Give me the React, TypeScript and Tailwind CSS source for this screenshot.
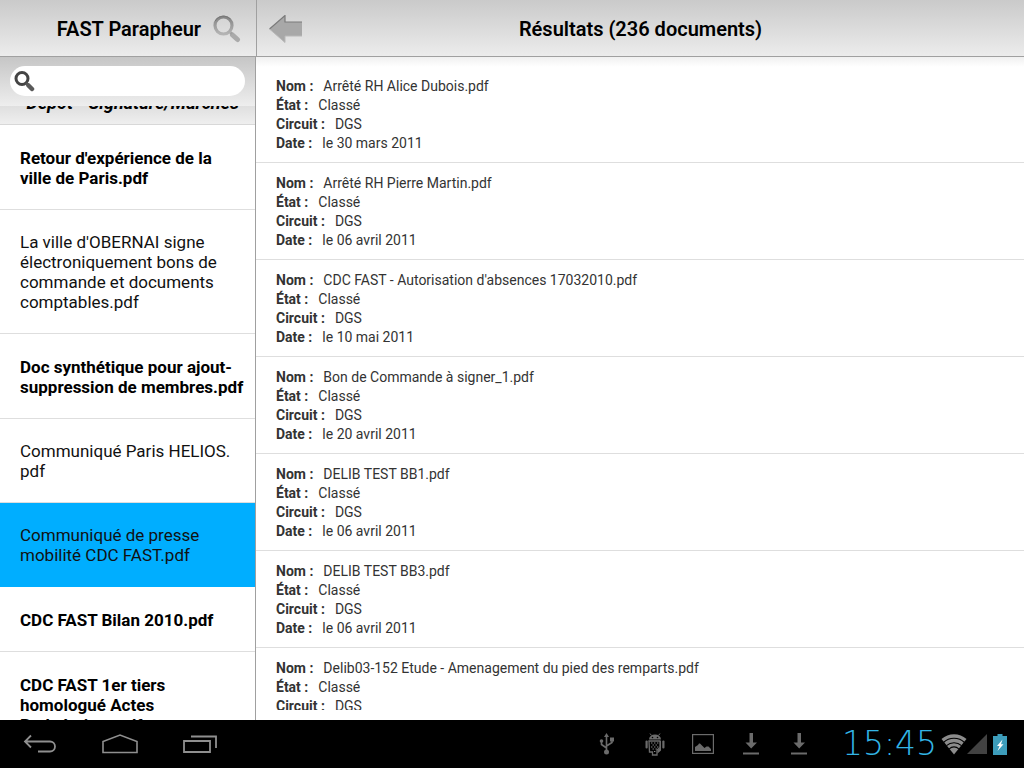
import React from 'react';

interface SidebarItem {
  title: string;
  unread?: boolean;
  selected?: boolean;
}

interface ResultItem {
  nom: string;
  etat: string;
  circuit: string;
  date: string;
}

const sidebarItems: SidebarItem[] = [
  { title: "Retour d'expérience de la ville de Paris.pdf", unread: true },
  { title: "La ville d'OBERNAI signe électroniquement bons de commande et documents comptables.pdf" },
  { title: 'Doc synthétique pour ajout-suppression de membres.pdf', unread: true },
  { title: 'Communiqué Paris HELIOS.\u200bpdf' },
  { title: 'Communiqué de presse mobilité CDC FAST.pdf', selected: true },
  { title: 'CDC FAST Bilan 2010.pdf', unread: true },
  { title: 'CDC FAST 1er tiers homologué Actes Budgétaires.pdf', unread: true },
];

const results: ResultItem[] = [
  { nom: 'Arrêté RH Alice Dubois.pdf', etat: 'Classé', circuit: 'DGS', date: 'le 30 mars 2011' },
  { nom: 'Arrêté RH Pierre Martin.pdf', etat: 'Classé', circuit: 'DGS', date: 'le 06 avril 2011' },
  { nom: "CDC FAST - Autorisation d'absences 17032010.pdf", etat: 'Classé', circuit: 'DGS', date: 'le 10 mai 2011' },
  { nom: 'Bon de Commande à signer_1.pdf', etat: 'Classé', circuit: 'DGS', date: 'le 20 avril 2011' },
  { nom: 'DELIB TEST BB1.pdf', etat: 'Classé', circuit: 'DGS', date: 'le 06 avril 2011' },
  { nom: 'DELIB TEST BB3.pdf', etat: 'Classé', circuit: 'DGS', date: 'le 06 avril 2011' },
  { nom: 'Delib03-152 Etude - Amenagement du pied des remparts.pdf', etat: 'Classé', circuit: 'DGS', date: 'le 06 avril 2011' },
];

function HeaderSearchIcon() {
  return (
    <svg width="28" height="28" viewBox="0 0 28 28" fill="none">
      <defs>
        <linearGradient id="lens" x1="0" y1="0" x2="0" y2="1">
          <stop offset="0" stopColor="#858585" />
          <stop offset="1" stopColor="#b4b4b4" />
        </linearGradient>
      </defs>
      <path d="M19.5 20l5 4.500" stroke="#aaaaaa" strokeWidth="5" strokeLinecap="round" />
      <path d="M16 16l3 3" stroke="#a0a0a0" strokeWidth="2.5" />
      <circle cx="10.5" cy="10.5" r="8.5" stroke="url(#lens)" strokeWidth="3.2" />
      <path d="M2.200 6a9.500 9.500 0 0 1 15-2" stroke="#777" strokeWidth="1" />
    </svg>
  );
}

function BackArrowIcon() {
  return (
    <svg width="34" height="28" viewBox="0 0 34 28">
      <path d="M0.5 14L16 0.5V7H33V21H16V27.5Z" fill="#a8a8a8" />
      <path d="M0.5 14L16 0.5V7H33" fill="none" stroke="#7b7b7b" strokeWidth="1.2" />
      <path d="M33 21H16V27.5L0.5 14" fill="none" stroke="#b8b8b8" strokeWidth="1" />
    </svg>
  );
}

function FieldSearchIcon() {
  return (
    <svg width="21" height="21" viewBox="0 0 21 21" fill="none">
      <circle cx="8" cy="7.5" r="6" stroke="#444" strokeWidth="3" />
      <path d="M12 12l2 2" stroke="#555" strokeWidth="3" />
      <path d="M14.5 14.5l3.5 3.5" stroke="#5a5a5a" strokeWidth="4.5" strokeLinecap="round" />
    </svg>
  );
}

function UsbIcon() {
  return (
    <svg width="16" height="22" viewBox="0 0 16 22" fill="none">
      <path d="M7.5 3v15M7.5 15L2.5 11.5V8M7.5 13L13 9.5V6" stroke="#6b6b6b" strokeWidth="1.6" />
      <path d="M7.5 0L10 4H5Z" fill="#6b6b6b" />
      <circle cx="7.5" cy="19" r="2.5" fill="#6b6b6b" />
      <circle cx="2.5" cy="8" r="1.8" fill="#6b6b6b" />
      <path d="M11 4.5h4v4h-4z" fill="#6b6b6b" />
    </svg>
  );
}

function AndroidIcon() {
  return (
    <svg width="20" height="23" viewBox="0 0 20 23" fill="none">
      <path d="M4 6.5a6 5 0 0 1 12 0z" fill="#6b6b6b" />
      <path d="M6.5 2.5L5 0.5M13.5 2.5L15 0.5" stroke="#6b6b6b" strokeWidth="1" />
      <circle cx="7.5" cy="4.5" r="0.8" fill="#000" />
      <circle cx="12.5" cy="4.5" r="0.8" fill="#000" />
      <rect x="0.5" y="7.5" width="2.2" height="8" rx="1" fill="#6b6b6b" />
      <rect x="17.3" y="7.5" width="2.2" height="8" rx="1" fill="#6b6b6b" />
      <path d="M4 8h11v6.5l-3 2.5v5H7.5v-3H4.5Z" stroke="#6b6b6b" strokeWidth="1.3" />
      <path d="M15 8v7l-2.5 2v3.5l3.5-3V8Z" fill="#6b6b6b" />
      <path
        d="M6 10h1.4M9 10h1.4M12 10h1.4M7.5 12h1.4M10.5 12h1.4M6 14h1.4M9 14h1.4M12 14h1.4M7.5 16h1.4M10.5 16h1.4M9 18.5h1.4"
        stroke="#858585"
        strokeWidth="1.2"
      />
    </svg>
  );
}

function PictureIcon() {
  return (
    <svg width="22" height="20" viewBox="0 0 22 20" fill="none">
      <rect x="0.6" y="0.6" width="20.8" height="18.8" stroke="#6b6b6b" strokeWidth="1.2" />
      <path d="M3 17v-4l3-2 1-1.5h1l2.5 2.5 2 2 2-1.5h2l2.5 2.5v2z" fill="#6b6b6b" />
    </svg>
  );
}

function DownloadIcon() {
  return (
    <svg width="16" height="22" viewBox="0 0 16 22" fill="#6b6b6b">
      <path d="M6.5 0h3.5v9.5h4L8.2 15.5 2.5 9.5h4zM0 19.5h16V21.5H0z" />
    </svg>
  );
}

function WifiIcon() {
  return (
    <svg width="26" height="21" viewBox="0 0 26 21" fill="none">
      <path d="M0.5 5a19 19 0 0 1 25 0L13 20.5Z" fill="#8c8c8c" />
      <path d="M2.5 8.5a15 15 0 0 1 21 0M5.5 11.7a11 11 0 0 1 15 0M8.2 14.8a7 7 0 0 1 9.6 0" stroke="#000" strokeWidth="1.1" />
    </svg>
  );
}

function BatteryIcon() {
  return (
    <svg width="14" height="21" viewBox="0 0 14 21">
      <path d="M4.5 0h5v2H14v19H0V2h4.5z" fill="#3d9dbb" />
      <path d="M9.5 5.5L4 12h2.5L4.5 17l6-6.8H8z" fill="#fff" />
    </svg>
  );
}

function Sidebar() {
  return (
    <aside className="flex w-1/4 shrink-0 flex-col border-r border-[#a0a0a0]">
      <div className="flex h-[49px] shrink-0 items-center bg-linear-to-b from-[#c6c6c6] to-[#eeeeee] px-2.5 pb-px">
        <label className="flex h-[30px] w-full items-center rounded-full bg-white pl-1">
          <FieldSearchIcon />
          <input type="text" aria-label="Rechercher" className="min-w-0 flex-1 bg-transparent px-2 text-base outline-none" />
        </label>
      </div>

      {/* Group heading, scrolled partly under the search field */}
      <div className="flex h-[19px] shrink-0 flex-col justify-end overflow-hidden border-b border-[#d8d8d8] bg-linear-to-b from-[#dfdfdf] to-[#efefef] pr-4 pb-[11px] text-right text-lg leading-5 font-bold whitespace-nowrap text-black italic">
        <h2>Dépôt - Signature/Marchés</h2>
      </div>

      <ul className="min-h-0 flex-1 overflow-hidden text-[17px] leading-5 text-[#111]">
        {sidebarItems.map((item) => (
          <li
            key={item.title}
            className={
              item.selected
                ? 'border-b border-[#00aeff] bg-[#00aeff] pt-[22px] pr-2.5 pb-[21px] pl-5'
                : item.unread
                  ? 'border-b border-[#dedede] pt-[23px] pr-2.5 pb-[21px] pl-5 font-bold text-black'
                  : 'border-b border-[#dedede] pt-[22px] pr-2.5 pb-[21px] pl-5'
            }
          >
            {item.title}
          </li>
        ))}
      </ul>
    </aside>
  );
}

function Field({ label, value }: { label: string; value: string }) {
  return (
    <div className="flex gap-2.5">
      <dt className="font-bold">{label} :</dt>
      <dd>{value}</dd>
    </div>
  );
}

function Results() {
  return (
    <main className="min-w-0 flex-1 overflow-hidden bg-linear-to-b from-[#f0f0f0] to-white to-[10px] pt-[9px] pb-2.5">
      <ul className="h-full overflow-hidden">
        {results.map((item) => (
          <li key={item.nom} className="border-b border-[#dedede] px-5 pt-[11px] pb-[9px]">
            <dl className="text-sm leading-[19px] text-[#333]">
              <Field label="Nom" value={item.nom} />
              <Field label="État" value={item.etat} />
              <Field label="Circuit" value={item.circuit} />
              <Field label="Date" value={item.date} />
            </dl>
          </li>
        ))}
      </ul>
    </main>
  );
}

function SystemBar() {
  return (
    <footer className="flex h-12 shrink-0 items-center justify-between bg-black pr-[17px]">
      <nav className="flex h-full">
        <button aria-label="Retour" className="flex w-20 items-center justify-center">
          <svg width="34" height="20" viewBox="0 0 34 20" fill="none" stroke="#8f8f8f" strokeWidth="1.8">
            <path d="M8 1.5L2 7.5l6 6M2 7.5h25a5 5 0 0 1 0 10H15" />
          </svg>
        </button>
        <button aria-label="Accueil" className="flex w-20 items-center justify-center">
          <svg width="36" height="20" viewBox="0 0 36 20" fill="none" stroke="#8f8f8f" strokeWidth="1.6">
            <path d="M1 18.5V7.5L18 1l17 6.500v11z" />
          </svg>
        </button>
        <button aria-label="Applications récentes" className="flex w-20 items-center justify-center">
          <svg width="34" height="18" viewBox="0 0 34 18" fill="none" stroke="#8f8f8f" strokeWidth="1.8">
            <path d="M1 6h26v11H1zM8 1.500h25V13" />
          </svg>
        </button>
      </nav>

      <div className="flex items-center">
        <div className="flex w-12 justify-center"><UsbIcon /></div>
        <div className="flex w-12 justify-center"><AndroidIcon /></div>
        <div className="flex w-12 justify-center"><PictureIcon /></div>
        <div className="flex w-12 justify-center"><DownloadIcon /></div>
        <div className="flex w-12 justify-center"><DownloadIcon /></div>
        <time className="w-[118px] pr-1 text-right font-['DejaVu_Sans_Light','DejaVu_Sans',sans-serif] text-[33px] leading-8 font-extralight text-[#33b5e5]">
          15:45
        </time>
        <WifiIcon />
        <svg width="20" height="20" viewBox="0 0 20 20">
          <path d="M20 0v20H0z" fill="#424242" />
        </svg>
        <div className="ml-1.5"><BatteryIcon /></div>
      </div>
    </footer>
  );
}

export default function App() {
  return (
    <div className="flex h-screen flex-col overflow-hidden bg-white font-[Roboto,sans-serif]">
      <header className="flex h-[57px] shrink-0 border-b border-[#a0a0a0] bg-linear-to-b from-[#cacaca] to-[#ececec] text-xl font-semibold text-black">
        <div className="flex w-1/4 shrink-0 items-center justify-end gap-3 pt-px pr-[15px]">
          <h1>FAST Parapheur</h1>
          <button aria-label="Rechercher un document"><HeaderSearchIcon /></button>
        </div>
        <div className="grid flex-1 grid-cols-[1fr_auto_1fr] items-center border-l border-[#a0a0a0] px-3 pt-px">
          <button aria-label="Revenir" className="justify-self-start"><BackArrowIcon /></button>
          <h2>Résultats (236 documents)</h2>
        </div>
      </header>
      <div className="flex min-h-0 flex-1">
        <Sidebar />
        <Results />
      </div>
      <SystemBar />
    </div>
  );
}
